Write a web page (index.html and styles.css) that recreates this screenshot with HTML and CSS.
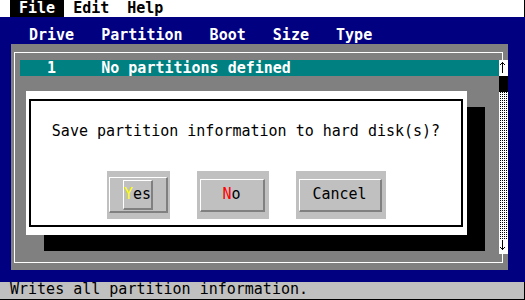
FILE: index.html
```html
<!DOCTYPE html>
<html lang="en">
<head>
    <meta charset="UTF-8">
    <title>Partition</title>
    <link rel="stylesheet" href="styles.css">
</head>
<body>

<div class="screen">
    <div class="menubar">
        <span class="menu active">File</span>
        <span class="menu">Edit</span>
        <span class="menu">Help</span>
    </div>

    <div class="workspace">
        <div class="heads">Drive   Partition   Boot   Size   Type</div>
        <div class="panel">
            <div class="frame">
                <div class="list">
                    <div class="row">  1     No partitions defined</div>
                </div>
                <div class="scrollbar">
                    <div class="arrow up">
                        <svg width="9" height="16" viewBox="0 0 9 16" shape-rendering="crispEdges">
                            <rect x="3" y="2" width="1" height="11" fill="#000"/>
                            <rect x="2" y="3" width="3" height="1" fill="#000"/>
                            <rect x="1" y="4" width="1" height="1" fill="#000"/>
                            <rect x="5" y="4" width="1" height="1" fill="#000"/>
                        </svg>
                    </div>
                    <div class="thumb"></div>
                    <div class="track"></div>
                    <div class="arrow down">
                        <svg width="9" height="14" viewBox="0 0 9 14" shape-rendering="crispEdges">
                            <rect x="3" y="0" width="1" height="10" fill="#000"/>
                            <rect x="2" y="8" width="3" height="1" fill="#000"/>
                            <rect x="1" y="7" width="1" height="1" fill="#000"/>
                            <rect x="5" y="7" width="1" height="1" fill="#000"/>
                        </svg>
                    </div>
                </div>
            </div>
        </div>
    </div>

    <div class="status">Writes all partition information.</div>

    <div class="dialog">
        <div class="dialog-inner">
            <div class="message">Save partition information to hard disk(s)?</div>
            <div class="buttons">
                <div class="btn btn-yes focus">
                    <div class="face"><div class="face"><span class="hot-yellow">Y</span>es</div></div>
                </div>
                <div class="btn btn-no">
                    <div class="face"><span class="hot-red">N</span>o</div>
                </div>
                <div class="btn btn-cancel">
                    <div class="face">Cancel</div>
                </div>
            </div>
        </div>
    </div>
</div>

</body>
</html>
```

FILE: styles.css
```css
* {
    margin: 0;
    padding: 0;
    box-sizing: border-box;
}

body {
    width: 525px;
    height: 300px;
    overflow: hidden;
    background: #000080;
    font-family: "DejaVu Sans Mono", monospace;
    font-size: 15px;
    line-height: 16px;
    color: #000;
}

.screen {
    position: relative;
    width: 525px;
    height: 300px;
    display: flex;
    flex-direction: column;
}

/* top menu */
.menubar {
    height: 17px;
    line-height: 17px;
    background: #fff;
    display: flex;
    padding-left: 10px;
    font-weight: bold;
    border-right: 1px solid #000;
}

.menu {
    padding: 0 9px;
    white-space: pre;
}

.menu.active {
    background: #000;
    color: #fff;
}

/* blue work area */
.workspace {
    flex: 1;
    display: flex;
    flex-direction: column;
    padding: 0 17px 12px 11px;
    background: #000080;
}

.heads {
    height: 27px;
    padding: 10px 0 1px 18px;
    color: #fff;
    font-weight: bold;
    white-space: pre;
}

.panel {
    flex: 1;
    display: flex;
    background: #808080;
    padding: 8px 5px 7px 3px;
}

.frame {
    flex: 1;
    display: flex;
    border: 1px solid #fff;
    padding: 7px 0 8px 5px;
}

.list {
    flex: 1;
}

.row {
    height: 16px;
    padding-left: 9px;
    background: #008080;
    color: #fff;
    font-weight: bold;
    white-space: pre;
}

.scrollbar {
    width: 9px;
    margin-right: -6px;
    display: flex;
    flex-direction: column;
}

.arrow {
    background: #fff;
}

.arrow svg {
    display: block;
}

.up {
    height: 16px;
}

.down {
    height: 14px;
}

.thumb {
    height: 16px;
    background: #000;
}

.track {
    flex: 1;
    background: repeating-conic-gradient(#000 0 25%, #fff 0 100%) 0 0 / 2px 2px;
}

/* status line */
.status {
    height: 18px;
    line-height: 15px;
    padding-left: 10px;
    background: #c0c0c0;
    border-right: 1px solid #000;
    border-bottom: 1px solid #000;
    white-space: pre;
}

/* modal dialog */
.dialog {
    position: absolute;
    left: 26px;
    top: 91px;
    width: 441px;
    height: 144px;
    background: #fff;
    padding: 8px 4px 8px 3px;
    box-shadow: 18px 16px 0 #000;
}

.dialog-inner {
    height: 100%;
    border: 2px solid #000;
    display: flex;
    flex-direction: column;
    align-items: center;
    padding-top: 22px;
}

.message {
    white-space: pre;
}

.buttons {
    display: flex;
    gap: 27px;
    margin-top: 32px;
}

.btn {
    height: 48px;
    background: #c0c0c0;
    padding: 8px 4px 7px 3px;
}

.btn-yes {
    width: 63px;
    padding: 6px 2px 6px 2px;
}

.btn-no {
    width: 72px;
}

.btn-cancel {
    width: 90px;
}

.face {
    height: 100%;
    display: flex;
    align-items: center;
    justify-content: center;
    border-top: 1px solid #fff;
    border-left: 1px solid #fff;
    border-right: 2px solid #808080;
    border-bottom: 2px solid #808080;
    padding-bottom: 2px;
}

.focus > .face {
    padding: 2px 1px 1px 2px;
}

.hot-yellow {
    color: #ffff00;
}

.hot-red {
    color: #ff0000;
}
```
